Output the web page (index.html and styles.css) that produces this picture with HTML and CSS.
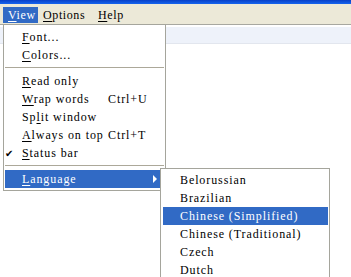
FILE: index.html
```html
<!DOCTYPE html>
<html lang="en">
<head>
    <meta charset="UTF-8">
    <title>View menu</title>
    <link rel="stylesheet" href="styles.css">
</head>
<body>

    <div class="titlebar"></div>

    <!--메뉴바-->
    <div class="menubar">
        <span class="menu-item view active"><u>V</u>iew</span>
        <span class="menu-item options"><u>O</u>ptions</span>
        <span class="menu-item help"><u>H</u>elp</span>
    </div>
    <div class="strip"></div>

    <!--View 메뉴-->
    <div class="dropdown">
        <div class="item"><span class="label"><u>F</u>ont...</span></div>
        <div class="item"><span class="label"><u>C</u>olors...</span></div>
        <div class="sep"></div>
        <div class="item"><span class="label"><u>R</u>ead only</span></div>
        <div class="item"><span class="label"><u>W</u>rap words</span><span class="key">Ctrl+U</span></div>
        <div class="item"><span class="label">Sp<u>l</u>it window</span></div>
        <div class="item"><span class="label"><u>A</u>lways on top</span><span class="key">Ctrl+T</span></div>
        <div class="item"><span class="check">&#10004;</span><span class="label"><u>S</u>tatus bar</span></div>
        <div class="sep"></div>
        <div class="item active"><span class="label"><u>L</u>anguage</span><span class="arrow"></span></div>
    </div>

    <!--Language 서브메뉴-->
    <div class="submenu">
        <div class="item">Belorussian</div>
        <div class="item">Brazilian</div>
        <div class="item active">Chinese (Simplified)</div>
        <div class="item">Chinese (Traditional)</div>
        <div class="item">Czech</div>
        <div class="item">Dutch</div>
    </div>

</body>
</html>
```

FILE: styles.css
```css
* {
    margin: 0;
    padding: 0;
    box-sizing: border-box;
}

body {
    width: 351px;
    height: 277px;
    overflow: hidden;
    background-color: #ffffff;
    font-family: "Liberation Serif", serif;
    font-size: 12px;
    letter-spacing: 0.9px;
    color: #000000;
}

u {
    text-decoration: underline;
    text-decoration-thickness: 1px;
    text-underline-offset: 2px;
}

.titlebar {
    height: 4px;
    background: linear-gradient(#0840c8, #1664ee);
}

.menubar {
    display: flex;
    height: 21px;
    padding-left: 3px;
    background-color: #ece9d8;
    border-bottom: 1px solid #a8a8a0;
    letter-spacing: 0.6px;
}

.menu-item {
    height: 18px;
    padding: 4px 0 0 5px;
}

.menu-item.view {
    width: 35px;
}

.menu-item.options {
    width: 55px;
}

.menu-item.help {
    width: 36px;
}

.menu-item.active {
    background-color: #316ac5;
    color: #ffffff;
    margin-top: 3px;
    height: 16px;
    padding-top: 1px;
}

.strip {
    height: 17px;
    margin-top: 2px;
    background-color: #eef2fa;
    border-bottom: 1px solid #e2e6ee;
}

.dropdown {
    position: absolute;
    left: 3px;
    top: 24px;
    width: 163px;
    height: 167px;
    padding: 3px 1px 1px 1px;
    background-color: #ffffff;
    border: 1px solid #a5a59c;
}

.item {
    position: relative;
    display: flex;
    align-items: center;
    height: 18px;
    padding-left: 17px;
    white-space: pre;
}

.item.active {
    background-color: #316ac5;
    color: #ffffff;
}

.dropdown .label {
    width: 86px;
}

.check {
    position: absolute;
    left: 0;
    width: 6px;
    font-family: "DejaVu Sans", sans-serif;
    font-size: 10px;
    letter-spacing: 0;
}

.arrow {
    position: absolute;
    right: 7px;
    top: 5px;
    border-top: 4px solid transparent;
    border-bottom: 4px solid transparent;
    border-left: 4px solid #ffffff;
}

.sep {
    height: 8px;
    padding-top: 3px;
}

.sep::after {
    content: "";
    display: block;
    height: 1px;
    background-color: #aca899;
}

.submenu {
    position: absolute;
    left: 160px;
    top: 168px;
    width: 170px;
    height: 120px;
    padding: 2px 1px 0 2px;
    background-color: #ffffff;
    border: 1px solid #a5a59c;
}
```
